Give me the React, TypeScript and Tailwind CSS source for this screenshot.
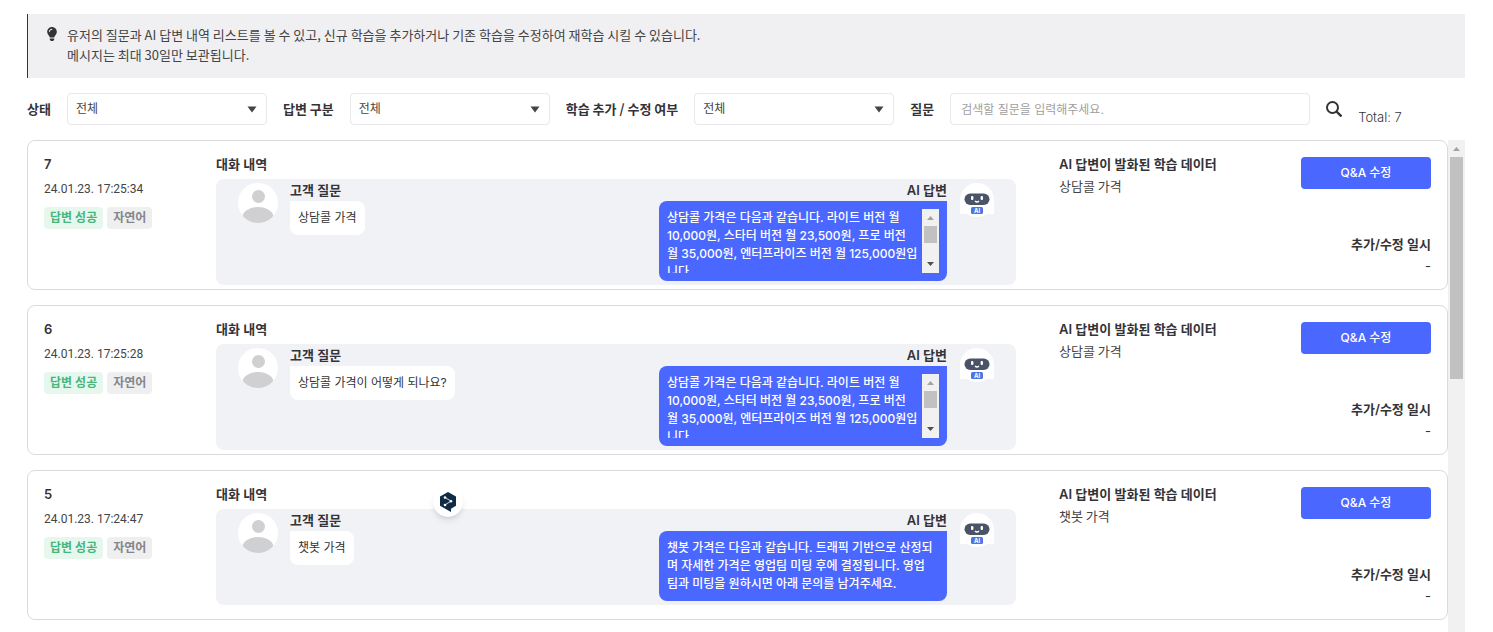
import React from "react";
import { FaLightbulb } from "react-icons/fa";

interface Conversation {
  id: number;
  date: string;
  question: string;
  answer: string;
  learned: string;
  overflow: boolean;
}

const priceAnswer =
  "상담콜 가격은 다음과 같습니다. 라이트 버전 월\n10,000원, 스타터 버전 월 23,500원, 프로 버전\n월 35,000원, 엔터프라이즈 버전 월 125,000원입\n니다.";

const conversations: Conversation[] = [
  {
    id: 7,
    date: "24.01.23. 17:25:34",
    question: "상담콜 가격",
    answer: priceAnswer,
    learned: "상담콜 가격",
    overflow: true,
  },
  {
    id: 6,
    date: "24.01.23. 17:25:28",
    question: "상담콜 가격이 어떻게 되나요?",
    answer: priceAnswer,
    learned: "상담콜 가격",
    overflow: true,
  },
  {
    id: 5,
    date: "24.01.23. 17:24:47",
    question: "챗봇 가격",
    answer:
      "챗봇 가격은 다음과 같습니다. 트래픽 기반으로 산정되\n며 자세한 가격은 영업팀 미팅 후에 결정됩니다. 영업\n팀과 미팅을 원하시면 아래 문의를 남겨주세요.",
    learned: "챗봇 가격",
    overflow: false,
  },
];

// -------------------- Icons --------------------
const UserAvatar: React.FC = () => (
  <svg viewBox="0 0 40 40" className="size-10 shrink-0" aria-hidden="true">
    <clipPath id="avatar-clip">
      <circle cx="20" cy="20" r="20" />
    </clipPath>
    <circle cx="20" cy="20" r="20" fill="#fff" />
    <g clipPath="url(#avatar-clip)" fill="#d0d0d2">
      <circle cx="20.5" cy="13.5" r="6.5" />
      <ellipse cx="20" cy="34" rx="15.5" ry="10" />
    </g>
  </svg>
);

const BotAvatar: React.FC = () => (
  <svg viewBox="0 0 34 34" className="size-[34px] shrink-0" aria-hidden="true">
    <circle cx="17" cy="17" r="17" fill="#fff" />
    <path d="M0 17h34v14H0z" fill="#fff" />
    <rect x="4.5" y="10.5" width="25" height="11.5" rx="5.7" fill="#4b5366" />
    <rect x="11" y="13" width="2.4" height="4" rx="1" fill="#fff" />
    <rect x="20.6" y="13" width="2.4" height="4" rx="1" fill="#fff" />
    <path d="M15 18q2 2 4 0" stroke="#fff" strokeWidth="1.3" fill="none" />
    <rect x="11" y="24" width="12" height="7" rx="1.5" fill="#4f74e3" />
    <text x="17" y="29.8" fontSize="6" fontWeight="700" textAnchor="middle" fill="#fff">
      AI
    </text>
  </svg>
);

const SearchIcon: React.FC = () => (
  <svg viewBox="0 0 16 16" className="size-4" fill="none" stroke="#333" strokeWidth="2" aria-hidden="true">
    <circle cx="6.5" cy="6.5" r="5.5" />
    <path d="M10.5 10.5l5 5" strokeWidth="2.4" />
  </svg>
);

// -------------------- Scrollbar --------------------
const Scrollbar: React.FC<{ thumb: string; end?: boolean }> = ({ thumb, end }) => (
  <div className="flex w-[17px] shrink-0 flex-col items-center self-stretch bg-[#f1f1f1]" aria-hidden="true">
    <svg viewBox="0 0 17 17" className="size-[17px] shrink-0">
      <path d="M5 11l3.5-4 3.5 4z" fill="#a3a3a3" />
    </svg>
    <div className={`w-[13px] shrink-0 bg-[#c1c1c1] ${thumb}`} />
    {end && (
      <svg viewBox="0 0 17 17" className="mt-auto size-[17px] shrink-0">
        <path d="M5 6l3.5 4L12 6z" fill="#505050" />
      </svg>
    )}
  </div>
);

// -------------------- Filter --------------------
const FilterSelect: React.FC<{ id: string; label: string }> = ({ id, label }) => (
  <>
    <label htmlFor={id} className="shrink-0 font-['Noto_Sans_CJK_KR',sans-serif] font-semibold">
      {label}
    </label>
    <div className="relative w-[200px]">
      <select
        id={id}
        className="h-8 w-full appearance-none rounded-sm border border-[#e8e8ea] bg-white px-2 text-xs text-[#444]"
      >
        <option>전체</option>
      </select>
      <svg
        viewBox="0 0 10 7"
        className="pointer-events-none absolute top-[13px] right-2.5 h-[7px] w-2.5"
        aria-hidden="true"
      >
        <path d="M0.500 0.500h9L5 6.500z" fill="#444" />
      </svg>
    </div>
  </>
);

// -------------------- Card --------------------
const ConversationCard: React.FC<Conversation> = ({ id, date, question, answer, learned, overflow }) => (
  <article className="flex min-h-[150px] shrink-0 rounded-lg border border-[#d9dadd] px-4 pt-4 pb-1 leading-[14px]">
    <div className="w-[172px] shrink-0">
      <h2 className="mb-2 font-semibold">{id}</h2>
      <p className="mb-2 font-['Roboto',sans-serif] text-xs leading-5 text-[#444]">{date}</p>
      <div className="flex gap-1 text-xs leading-[22px] font-semibold">
        <span className="rounded-sm bg-[#e6f8ee] px-1.5 text-[#48b57c]">답변 성공</span>
        <span className="rounded-sm bg-[#efeff0] px-1.5 text-[#85868b]">자연어</span>
      </div>
    </div>

    <div className="w-[800px] shrink-0">
      <h3 className="mb-2 font-semibold">대화 내역</h3>
      <div className="flex items-start rounded-lg bg-[#f1f2f5] px-[22px] py-1">
        <UserAvatar />
        <div className="ml-3">
          <h4 className="mb-1 font-semibold">고객 질문</h4>
          <p className="rounded-lg rounded-tl-none bg-white p-2 text-xs leading-[18px] text-[#333]">{question}</p>
        </div>
        <div className="ml-auto w-[288px]">
          <h4 className="mb-1 text-right font-semibold">AI 답변</h4>
          <div className="rounded-lg rounded-tr-none bg-[#4a67ff] p-2 text-white">
            <div className="flex max-h-16 overflow-hidden">
              <p className="flex-1 text-xs leading-[18px] font-medium whitespace-pre">{answer}</p>
              {overflow && <Scrollbar thumb="h-[17px]" end />}
            </div>
          </div>
        </div>
        <div className="ml-[13px]">
          <BotAvatar />
        </div>
      </div>
    </div>

    <div className="ml-[43px] flex-1">
      <h3 className="mb-2 font-semibold">AI 답변이 발화된 학습 데이터</h3>
      <p className="font-['Noto_Sans_CJK_KR',sans-serif] text-[#444]">{learned}</p>
    </div>

    <div className="flex w-[130px] shrink-0 flex-col items-end pb-3">
      <button type="button" className="h-8 w-full rounded-sm bg-[#4a67ff] text-xs font-medium text-white">
        Q&amp;A 수정
      </button>
      <h3 className="mt-auto mb-2 font-semibold">추가/수정 일시</h3>
      <p>-</p>
    </div>
  </article>
);

// -------------------- Page --------------------
const App: React.FC = () => {
  return (
    <main className="flex h-screen flex-col overflow-hidden bg-white pt-3.5 pr-7 pl-[27px] font-['Inter','Noto_Sans_CJK_KR',sans-serif] text-[13px] text-[#333338]">
      <div className="flex shrink-0 border-l border-[#333] bg-[#f0f0f3] pt-[11px] pb-[13px] pl-[17px] font-['Noto_Sans_CJK_KR',sans-serif] leading-5 text-[#444]">
        <FaLightbulb className="mt-0.5 mr-2 size-3.5 shrink-0 text-[#333]" />
        <p>
          유저의 질문과 AI 답변 내역 리스트를 볼 수 있고, 신규 학습을 추가하거나 기존 학습을 수정하여 재학습 시킬 수 있습니다.
          <br />
          메시지는 최대 30일만 보관됩니다.
        </p>
      </div>

      <div className="my-[15px] flex h-8 shrink-0 items-center gap-4">
        <FilterSelect id="status" label="상태" />
        <FilterSelect id="answer-type" label="답변 구분" />
        <FilterSelect id="learning" label="학습 추가 / 수정 여부" />
        <label htmlFor="question" className="shrink-0 font-['Noto_Sans_CJK_KR',sans-serif] font-semibold">
          질문
        </label>
        <input
          id="question"
          type="text"
          placeholder="검색할 질문을 입력해주세요."
          className="h-8 w-[360px] rounded-sm border border-[#e8e8ea] px-2.5 text-xs placeholder:text-[#a0a0a0]"
        />
        <button type="button" aria-label="검색">
          <SearchIcon />
        </button>
        <p className="self-end leading-4 font-light">Total: 7</p>
      </div>

      <div className="flex min-h-0 flex-1">
        <div className="flex flex-1 flex-col gap-[15px] overflow-hidden">
          {conversations.map((c) => (
            <ConversationCard key={c.id} {...c} />
          ))}
        </div>
        <Scrollbar thumb="h-[222px]" />
      </div>

      {/* Floating extension button */}
      <button
        type="button"
        aria-label="번역"
        className="absolute top-[487px] left-[433px] flex size-[30px] items-center justify-center rounded-full bg-white shadow-md"
      >
        <svg viewBox="0 0 18 20" className="h-5 w-[18px]" fill="none" aria-hidden="true">
          <path d="M9 0l8 4.600v9.200L12 16.700v3.300l-3.500-2L1 13.800V4.600z" fill="#0f2b46" />
          <path d="M6 5.500l6 3.600-6 3.800" stroke="#fff" strokeWidth="0.8" />
          <circle cx="6" cy="5.500" r="1.300" fill="#fff" />
          <circle cx="12" cy="9.200" r="1.300" fill="#fff" />
          <circle cx="6" cy="13" r="1.300" fill="#fff" />
        </svg>
      </button>
    </main>
  );
};

export default App;
